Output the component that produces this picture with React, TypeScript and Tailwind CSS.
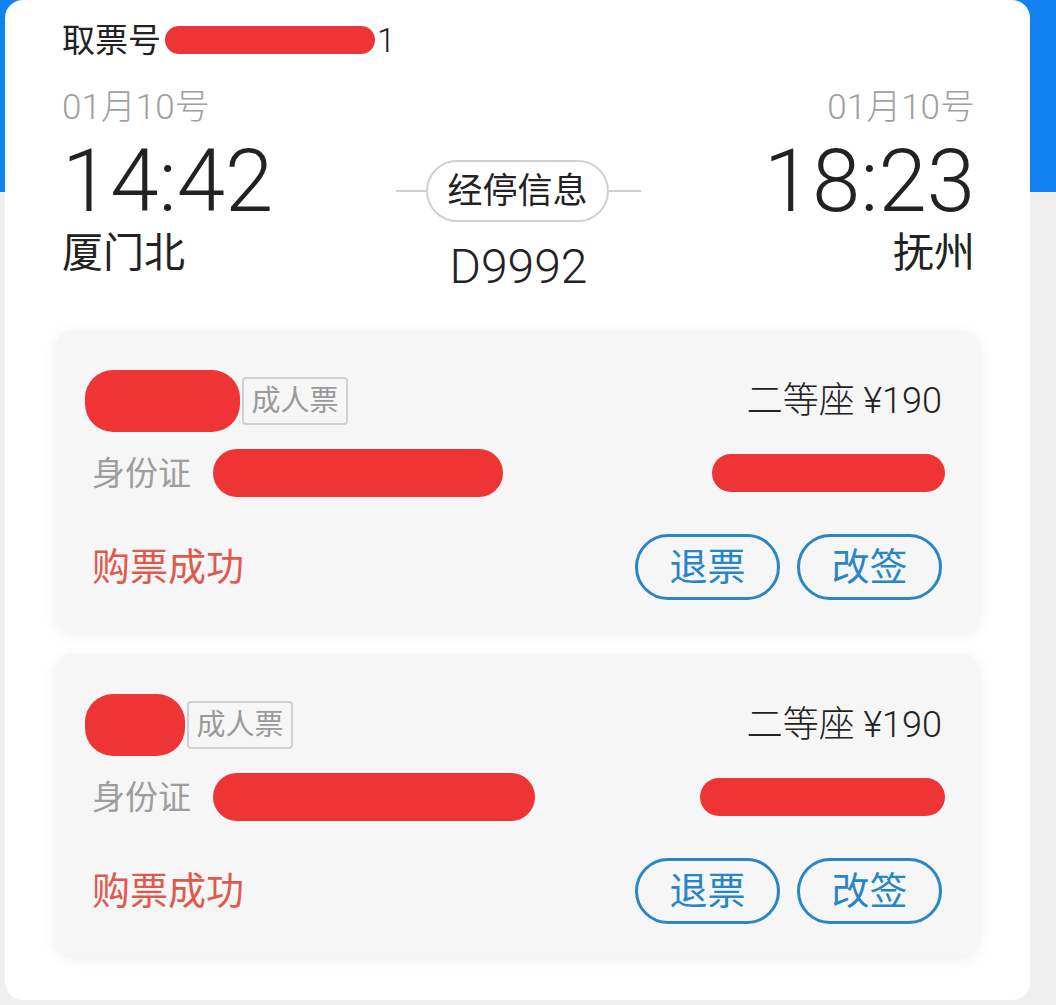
const font = 'font-["Roboto","Noto_Sans_CJK_SC",sans-serif]';

function Blot({ className }: { className: string }) {
  return <div className={`shrink-0 bg-[#ee3434] ${className}`} />;
}

interface Passenger {
  nameWidth: string;
  idBlot: string;
  seatBlot: string;
}

function TicketCard({ p }: { p: Passenger }) {
  return (
    <div className="rounded-[18px] bg-[#f6f6f7] pl-[37px] pr-[38px] pt-[47px] pb-[32px] shadow-[0_3px_14px_rgba(0,0,0,0.07)]">
      <div className="flex h-[48px] items-center justify-between">
        <div className="flex items-center">
          <Blot className={`-ml-[7px] h-[62px] rounded-[28px] ${p.nameWidth}`} />
          <span className="ml-[2px] flex h-[48px] w-[106px] items-center justify-center rounded-[4px] border-2 border-[#cfd0d4] text-[29px] leading-none text-[#9a9a9a]">
            成人票
          </span>
        </div>
        <span className="text-[36px] font-light leading-none text-[#222]">二等座 ¥190</span>
      </div>
      <div className="mt-[28px] flex h-[40px] items-center justify-between">
        <div className="flex items-center">
          <span className="text-[33px] leading-none text-[#9d9d9d]">身份证</span>
          <Blot className={`ml-[22px] h-[48px] rounded-[24px] ${p.idBlot}`} />
        </div>
        <Blot className={`-mr-[3px] h-[38px] rounded-[19px] ${p.seatBlot}`} />
      </div>
      <div className="mt-[41px] flex h-[66px] items-center justify-between">
        <span className="text-[38px] leading-none text-[#e0594d]">购票成功</span>
        <div className="flex gap-[17px]">
          {['退票', '改签'].map((t) => (
            <button
              key={t}
              type="button"
              className="flex h-[66px] w-[145px] items-center justify-center rounded-full border-[3px] border-[#2b86c6] text-[38px] leading-none text-[#2786c8]"
            >
              {t}
            </button>
          ))}
        </div>
      </div>
    </div>
  );
}

const passengers: Passenger[] = [
  { nameWidth: 'w-[155px]', idBlot: 'w-[290px]', seatBlot: 'w-[233px]' },
  { nameWidth: 'w-[100px]', idBlot: 'w-[322px]', seatBlot: 'w-[245px]' },
];

export default function App() {
  return (
    <div
      className={`h-[1005px] w-[1056px] overflow-hidden bg-[linear-gradient(#1282f0_0,#1282f0_192px,#efeff0_192px)] pl-[5px] ${font}`}
    >
      <div className="h-[1000px] w-[1025px] rounded-[18px] bg-white px-[50px]">
        <div className="flex h-[60px] items-center pl-[7px] pt-[20px]">
          <div className="flex h-[40px] items-center text-[33px] leading-none text-[#222]">
            <span>取票号</span>
            <Blot className="ml-[4px] h-[28px] w-[210px] rounded-[14px]" />
            <span className="ml-[2px] font-light">1</span>
          </div>
        </div>

        <div className="flex pl-[7px] pr-[5px]">
          <div className="flex flex-1 flex-col items-start">
            <div className="mt-[28px] h-[40px] text-[35px] font-light leading-[40px] text-[#a0a0a0]">01月10号</div>
            <div className="mt-[13px] h-[80px] text-[87px] font-light leading-[80px] text-[#222]">14:42</div>
            <div className="mt-[10px] h-[44px] text-[41px] leading-[44px] text-[#222]">厦门北</div>
          </div>

          <div className="flex flex-col items-center">
            <div className="mt-[100px] flex items-center">
              <div className="h-[2px] w-[30px] bg-[#cfcfcf]" />
              <div className="flex h-[62px] w-[183px] items-center justify-center rounded-full border-2 border-[#d0d0d0] text-[35px] leading-none text-[#222]">
                经停信息
              </div>
              <div className="h-[2px] w-[32px] bg-[#cfcfcf]" />
            </div>
            <div className="mt-[21px] h-[48px] text-[48px] font-light leading-[48px] text-[#222]">D9992</div>
          </div>

          <div className="flex flex-1 flex-col items-end">
            <div className="mt-[28px] h-[40px] text-[35px] font-light leading-[40px] text-[#a0a0a0]">01月10号</div>
            <div className="mt-[13px] h-[80px] text-[87px] font-light leading-[80px] text-[#222]">18:23</div>
            <div className="mt-[10px] h-[44px] text-[41px] leading-[44px] text-[#222]">抚州</div>
          </div>
        </div>

        <div className="mt-[39px] flex flex-col gap-[22px]">
          {passengers.map((p, i) => (
            <TicketCard key={i} p={p} />
          ))}
        </div>
      </div>
    </div>
  );
}
